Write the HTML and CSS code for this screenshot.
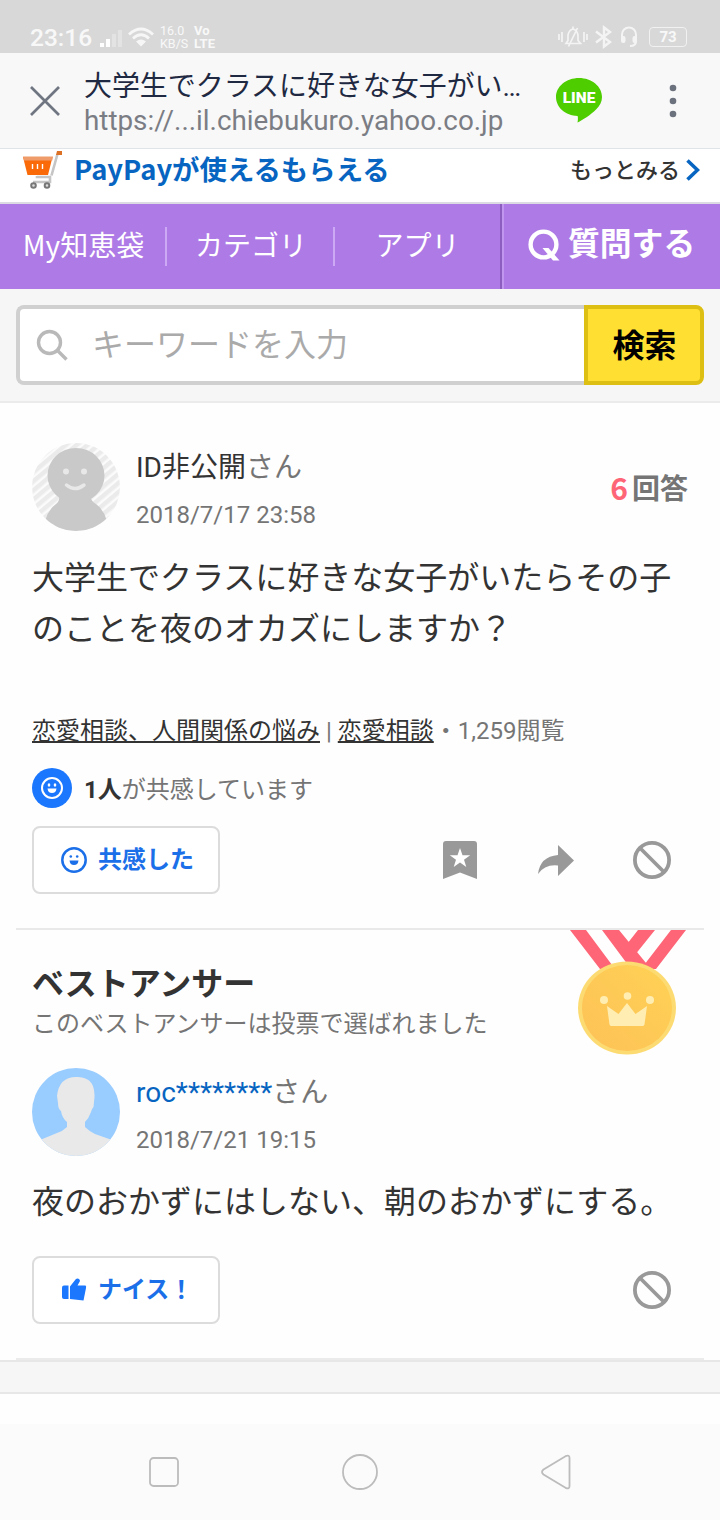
FILE: index.html
```html
<!DOCTYPE html>
<html lang="ja">
<head>
<meta charset="utf-8">
<title>Yahoo!知恵袋</title>
<link rel="stylesheet" href="styles.css">
</head>
<body>
<div class="status">
  <span class="clock">23:16</span>
  <svg class="signal" width="22" height="18" viewBox="0 0 22 18"><g fill="#fff"><rect x="0" y="13" width="4" height="4"/><rect x="6" y="9" width="4" height="8"/><g opacity=".3"><rect x="12" y="4" width="4" height="13"/><rect x="18" y="0" width="4" height="17"/></g></g></svg>
  <svg class="wifi" width="26" height="20" viewBox="0 0 26 20"><g fill="none" stroke="#f6f6f6" stroke-width="2.8"><path d="M1 7.5Q13-3.5 25 7.5"/><path d="M5 11.5Q13 4 21 11.5"/></g><path d="M8 14.5Q13 10.5 18 14.5L13 19.5Z" fill="#f6f6f6"/></svg>
  <span class="tiny speed"><span>16.0</span><span>KB/S</span></span>
  <span class="tiny volte"><span>Vo</span><span>LTE</span></span>
  <span class="status-icons">
    <svg width="30" height="24" viewBox="0 0 30 24"><g fill="none" stroke="#f4f4f4" stroke-width="1.7"><path d="M1 9v6M4 7v10M26 7v10M29 9v6"/><path d="M8 18.500l2-3V10Q11 5 15 4Q19 5 20 10v5.500L22.500 18.500ZM15 4V1.500M19.500 3L10.500 21.500"/></g></svg>
    <svg width="18" height="24" viewBox="0 0 18 24"><path d="M1 6.500L15 17L9 21.500V2.500L15 7L1 17.500" fill="none" stroke="#f4f4f4" stroke-width="2.400"/></svg>
    <svg width="18" height="24" viewBox="0 0 18 24"><path d="M2 14V9.500a7 7 0 0 1 14 0V16Q16 21 10 21" fill="none" stroke="#f4f4f4" stroke-width="2"/><rect x="1" y="11" width="4.500" height="7" rx="2" fill="#f4f4f4"/><rect x="12.500" y="11" width="4.500" height="7" rx="2" fill="#f4f4f4"/></svg>
    <span class="battery">73</span>
  </span>
</div>

<header class="toolbar">
  <svg class="close" width="30" height="30" viewBox="0 0 30 30"><path d="M1 1L29 29M29 1L1 29" stroke="#6f7681" stroke-width="2.700"/></svg>
  <div class="page-info">
    <div class="page-title">大学生でクラスに好きな女子がい…</div>
    <div class="page-url">https://...il.chiebukuro.yahoo.co.jp</div>
  </div>
  <div class="line-logo">
    <svg width="46" height="45" viewBox="0 0 46 45"><path d="M23 0C35.700 0 46 8.500 46 19c0 5-2.200 9-6 12.500C35 36.500 27 42 21.500 44.500c.5-2.500.6-5 .1-6.600C9.500 37.500 0 29.500 0 19C0 8.500 10.300 0 23 0Z" fill="#4ecd00"/></svg>
    <span class="line-text">LINE</span>
  </div>
  <svg class="more" width="8" height="34" viewBox="0 0 8 34"><g fill="#6b727d"><circle cx="4" cy="4" r="3.300"/><circle cx="4" cy="17" r="3.300"/><circle cx="4" cy="30" r="3.300"/></g></svg>
</header>

<div class="promo">
  <svg class="cart" width="40" height="38" viewBox="0 0 40 38"><path d="M34.500 3L28.500 24.500M14 25v1h13v5H10" fill="none" stroke="#c5c5c5" stroke-width="2.600"/><path d="M0 6h29.500l-4.500 18H4.500Z" fill="#fa6a08"/><path d="M0 5.500h30l-.7 4H1Z" fill="#f09b6a"/><path d="M34 0h5v4h-6Z" fill="#dc7125"/><path d="M9.500 13v5M14.500 13v5M19.500 13v5" stroke="#fff" stroke-width="1.400"/><g fill="#ddd" stroke="#777" stroke-width="2"><circle cx="10.500" cy="34.500" r="2.300"/><circle cx="24" cy="34.500" r="2.300"/></g></svg>
  <span class="promo-title">PayPayが使えるもらえる</span>
  <span class="promo-more">もっとみる</span>
  <svg width="14" height="22" viewBox="0 0 14 22"><path d="M1.500 1.500L11.500 11L1.500 20.500" fill="none" stroke="#0765c1" stroke-width="3.600"/></svg>
</div>

<nav class="tabs">
  <a class="tab">My知恵袋</a>
  <a class="tab">カテゴリ</a>
  <a class="tab">アプリ</a>
  <a class="tab-ask"><svg width="33" height="33" viewBox="0 0 33 33"><circle cx="15.500" cy="15.500" r="12.900" fill="none" stroke="#fff" stroke-width="4.400"/><path d="M14.500 19h6l11 12.500h-6.500Z" fill="#fff"/></svg><span>質問する</span></a>
</nav>

<div class="search">
  <div class="search-box">
    <svg width="32" height="32" viewBox="0 0 32 32"><circle cx="13.500" cy="13.500" r="11" fill="none" stroke="#b9b9b9" stroke-width="3.400"/><path d="M21 21L30.500 30.500" stroke="#b9b9b9" stroke-width="3.400"/></svg>
    <span>キーワードを入力</span>
  </div>
  <div class="search-btn">検索</div>
</div>

<section class="question">
  <div class="user">
    <svg width="88" height="88" viewBox="0 0 88 88"><defs><clipPath id="round"><circle cx="44" cy="44" r="44"/></clipPath><pattern id="stripes" width="7" height="7" patternUnits="userSpaceOnUse" patternTransform="rotate(50)"><rect width="7" height="7" fill="#fbfbfb"/><rect width="4.500" height="7" fill="#ebebeb"/></pattern></defs><g clip-path="url(#round)"><rect width="88" height="88" fill="url(#stripes)"/><ellipse cx="44" cy="32.500" rx="28.500" ry="27.500" fill="#c9c9c9"/><path d="M27 53Q28 58 24 61Q16 67 13 78V88H75V78Q72 67 64 61Q58 57 59 53Z" fill="#c9c9c9"/></g><g fill="#e8e8e8"><circle cx="34" cy="28.500" r="3"/><circle cx="52" cy="28.500" r="3"/></g><path d="M34.500 42Q43 49 52 42" fill="none" stroke="#e8e8e8" stroke-width="3.500" stroke-linecap="round"/></svg>
    <div class="who"><div class="name">ID非公開<span class="san">さん</span></div><div class="date">2018/7/17 23:58</div></div>
    <div class="count"><b>6</b>回答</div>
  </div>
  <p class="body">大学生でクラスに好きな女子がいたらその子のことを夜のオカズにしますか？</p>
  <div class="meta"><a class="cat">恋愛相談、人間関係の悩み</a> | <a class="cat">恋愛相談</a><span class="dot">・</span>1,259閲覧</div>
  <div class="empathy">
    <svg width="40" height="40" viewBox="0 0 40 40"><circle cx="20" cy="20" r="20" fill="#1b77fd"/><circle cx="20" cy="20" r="10" fill="none" stroke="#fff" stroke-width="2"/><g fill="#fff"><ellipse cx="17" cy="17" rx="1.300" ry="1.700"/><ellipse cx="23" cy="17" rx="1.300" ry="1.700"/><path d="M15.500 20.500h9Q24 25 20 25T15.500 20.500Z"/></g></svg>
    <span class="empathy-text"><b>1人</b>が共感しています</span>
  </div>
  <div class="actions">
    <a class="btn"><svg width="26" height="26" viewBox="0 0 26 26"><circle cx="13" cy="13" r="11.700" fill="none" stroke="#1b6fe8" stroke-width="2.500"/><g fill="#1b6fe8"><circle cx="9.800" cy="9.500" r="1.300"/><circle cx="16.200" cy="9.500" r="1.300"/><path d="M8.500 13.500h9Q17 18 13 18T8.500 13.500Z"/></g></svg><span>共感した</span></a>
    <div class="icons">
      <svg width="34" height="38" viewBox="0 0 34 38"><path d="M3 0H31Q34 0 34 3V38L17 31.500L0 38V3Q0 0 3 0Z" fill="#999"/><path d="M17 7l2.500 7.200h7.700l-6.200 4.600 2.300 7.200-6.300-4.500-6.300 4.500 2.300-7.200-6.200-4.600h7.700Z" fill="#fff"/></svg>
      <svg class="share" width="36" height="31" viewBox="0 0 36 31"><path d="M20 0L36 15.500L20 31V20.500Q7 19 0 29Q2 11.500 20 10Z" fill="#999"/></svg>
      <svg width="38" height="38" viewBox="0 0 38 38"><g fill="none" stroke="#999" stroke-width="3.800"><circle cx="19" cy="19" r="17.100"/><path d="M7.500 7.500L30.500 30.500"/></g></svg>
    </div>
  </div>
</section>

<section class="answer">
  <svg class="medal" width="118" height="126" viewBox="0 0 118 126"><defs><linearGradient id="gold" x1="1" y1="0" x2="0" y2="1"><stop offset="0" stop-color="#ffd255"/><stop offset="1" stop-color="#fdc157"/></linearGradient></defs><path d="M1 0H17L46 39H31ZM33 0H50L77 33L82 39H62ZM69 0H86L67.500 23L58 14ZM102 0H117L87 39L72 39Z" fill="#fe6677"/><ellipse cx="58" cy="78" rx="49" ry="46.500" fill="#fddb73"/><ellipse cx="58" cy="78" rx="45" ry="43" fill="url(#gold)"/><g fill="#ffedb2"><path d="M38 76l11.500 8L58 73l8.500 11L78 76l-2.500 18.500Q75 96 73.500 96H42.500Q41 96 40.500 94.500Z"/><circle cx="35" cy="70" r="4"/><circle cx="58.500" cy="66" r="3.800"/><circle cx="81" cy="70" r="4"/></g></svg>
  <h2 class="best">ベストアンサー</h2>
  <div class="voted">このベストアンサーは投票で選ばれました</div>
  <div class="user">
    <svg width="88" height="88" viewBox="0 0 88 88"><circle cx="44" cy="44" r="44" fill="#9cf"/><g clip-path="url(#round)" fill="#e9e9e9"><path d="M44 9C56 9 63 14 62.500 29L61.500 39Q59.500 41 59 44Q57 50 53 54V59Q57 63 63 66L80 72V90H8V72L25 65Q31 63 35 59V54Q30 50 29 43Q26 41 26 35L25 28Q27 9 44 9Z"/></g></svg>
    <div class="who"><div class="name"><a class="id">roc********</a><span class="san">さん</span></div><div class="date">2018/7/21 19:15</div></div>
  </div>
  <p class="body">夜のおかずにはしない、朝のおかずにする。</p>
  <div class="actions">
    <a class="btn"><svg width="26" height="26" viewBox="0 0 26 26"><g fill="#1b77fd"><path d="M3 8.500H7.500V22H3Q1 22 1 20V10.500Q1 8.500 3 8.500Z"/><path d="M9 9.500L14.500 2.500Q16.500 .5 18.500 2.500L19 4L16.500 8.500H24.500Q25.500 9 25 11L22.500 23.500L9 22Z"/></g></svg><span>ナイス！</span></a>
    <div class="icons">
      <svg width="38" height="38" viewBox="0 0 38 38"><g fill="none" stroke="#999" stroke-width="3.800"><circle cx="19" cy="19" r="17.100"/><path d="M7.500 7.500L30.500 30.500"/></g></svg>
    </div>
  </div>
</section>
<div class="gap"></div>

<footer class="sysnav">
  <svg width="30" height="30" viewBox="0 0 30 30"><rect x="1" y="1" width="28" height="28" rx="3.500" fill="none" stroke="#bcbcbc" stroke-width="1.800"/></svg>
  <svg width="36" height="36" viewBox="0 0 36 36"><circle cx="18" cy="18" r="17" fill="none" stroke="#bcbcbc" stroke-width="1.800"/></svg>
  <svg width="30" height="36" viewBox="0 0 30 36"><path d="M2.500 15.500L24.500 2.200Q28.500.5 28.500 4V32Q28.500 35.500 24.500 33.800L2.500 20.500Q-.5 18 2.500 15.500Z" fill="none" stroke="#bcbcbc" stroke-width="1.800"/></svg>
</footer>
</body>
</html>
```
FILE: styles.css
```css
* { box-sizing: border-box; }
body {
  margin: 0;
  width: 720px;
  height: 1520px;
  overflow: hidden;
  display: flex;
  flex-direction: column;
  background: #fefefe;
  color: #333;
  font-family: Roboto, "Noto Sans CJK JP", sans-serif;
}
svg { display: block; flex: none; }
p, h2 { margin: 0; }
span, a, div { white-space: nowrap; }

.status {
  height: 53px;
  flex: none;
  display: flex;
  align-items: center;
  padding: 20px 32px 0 30px;
  background: #d8d8d8;
  color: #f8f8f8;
}
.clock { width: 70px; font-size: 24.5px; font-weight: 500; line-height: 30px; padding-top: 3px; }
.wifi { margin: 0 6px; }
.signal { margin-top: 4px; }
.tiny { display: flex; flex-direction: column; font-size: 12.5px; line-height: 13px; }
.speed { width: 34px; }
.volte { font-weight: 700; font-size: 13px; }
.status-icons { display: flex; align-items: center; margin-left: auto; gap: 7px; margin-right: 1px; }
.battery {
  width: 38px;
  height: 20px;
  margin-left: 4px;
  border: 1.5px solid #f1f1f1;
  border-radius: 4px;
  font-size: 15px;
  line-height: 18px;
  font-weight: 700;
  text-align: center;
}

.toolbar {
  height: 96px;
  flex: none;
  display: flex;
  align-items: center;
  padding: 0 43px 0 30px;
  background: #f8f8f8;
  border-bottom: 1px solid #e0e4e8;
}
.page-info { width: 472px; margin-left: 24px; padding-top: 6px; }
.page-title { font-size: 27.95px; line-height: 35px; color: #1f2942; }
.page-url { font-size: 27.8px; line-height: 34px; color: #7b7d84; }
.line-logo { position: relative; width: 46px; height: 45px; }
.line-text {
  position: absolute;
  inset: 10px 0 auto;
  text-align: center;
  color: #fff;
  font-size: 15.5px;
  line-height: 20px;
  font-weight: 900;
}
.more { margin-left: auto; }

.promo {
  height: 55px;
  flex: none;
  display: flex;
  align-items: center;
  padding: 0 20px 12px 23px;
  background: #fff;
  border-bottom: 2px solid #dcdae2;
}
.promo-title {
  margin: -4px 0 0 11px;
  font: 700 27.4px/40px "Noto Sans CJK JP", sans-serif;
  color: #0765c1;
}
.promo-more {
  margin: -4px 6px 0 auto;
  font: 500 22px/40px "Noto Sans CJK JP", sans-serif;
}

.tabs {
  height: 85px;
  flex: none;
  display: grid;
  grid-template-columns: 167px 168px 165px 220px;
  align-items: center;
  background: #ae7ae6;
  color: #fff;
  font-family: "Noto Sans CJK JP", sans-serif;
}
.tab {
  height: 39px;
  padding-left: 2px;
  font-size: 28px;
  line-height: 34px;
  text-align: center;
  border-right: 2px solid #cda8f4;
}
.tab:nth-child(3) { border-color: transparent; }
.tab-ask {
  height: 85px;
  display: flex;
  align-items: center;
  gap: 7px;
  padding: 0 0 9px 26px;
  border-left: 2px solid #8d5dc0;
  box-shadow: inset 2px 0 #c196ef;
  font-size: 31.8px;
  line-height: 40px;
  font-weight: 700;
}
.tab-ask svg { margin-top: 6px; }
.tab-ask span { margin-top: -2px; }

.search {
  height: 114px;
  flex: none;
  display: flex;
  padding: 16px 16px 0;
  background: #f6f6f6;
  border-bottom: 2px solid #ebebeb;
}
.search-box {
  flex: 1;
  height: 80px;
  display: flex;
  align-items: center;
  gap: 24px;
  padding-left: 16px;
  background: #fff;
  border: 4px solid #d0d0d0;
  border-right: 0;
  border-radius: 8px 0 0 8px;
  color: #aaa;
  font-size: 32px;
}
.search-box span { line-height: 40px; }
.search-btn {
  width: 120px;
  height: 80px;
  padding-left: 1px;
  border: 4px solid #ddbf13;
  border-radius: 0 8px 8px 0;
  background: #ffdf31;
  color: #000;
  font-size: 32px;
  line-height: 75px;
  font-weight: 700;
  text-align: center;
}

.question {
  height: 525px;
  flex: none;
  padding: 40px 32px 0;
}
.user { display: flex; height: 88px; }
.who { margin-left: 16px; }
.name { font-size: 28px; line-height: 40px; padding-top: 5px; }
.san { color: #757575; }
.id { color: #0765c1; }
.date { font-size: 24px; line-height: 30px; margin-top: 12px; color: #757575; }
.count {
  display: flex;
  margin-left: auto;
  padding-top: 27px;
  gap: 4px;
  font: 700 28px/40px Roboto, "Noto Sans CJK JP", sans-serif;
  color: #757575;
}
.count b { margin-top: -3px; color: #fe6677; font: 700 30px/40px "Noto Sans CJK JP", sans-serif; }
.body { font-size: 32px; line-height: 51.2px; white-space: normal; }
.question .body { margin-top: 22px; }
.meta { margin-top: 58px; font-size: 24px; line-height: 36px; color: #757575; }
.cat { color: #333; text-decoration: underline; text-decoration-thickness: 2px; text-underline-offset: 2px; }
.empathy {
  display: flex;
  align-items: center;
  gap: 12px;
  margin-top: 19px;
  font-size: 24px;
  line-height: 36px;
  color: #757575;
}
.empathy-text { padding-top: 3px; }
.empathy b { color: #333; }
.actions { display: flex; justify-content: space-between; align-items: center; margin-top: 18px; padding-right: 17px; }
.btn {
  width: 188px;
  height: 68px;
  display: flex;
  align-items: center;
  gap: 11px;
  padding-left: 27px;
  border: 2px solid #dcdcdc;
  border-radius: 8px;
  background: #fff;
  color: #1b6fe8;
  font-size: 24px;
  line-height: 36px;
  font-weight: 700;
}
.icons { display: flex; align-items: center; gap: 59px; }
.share { margin-left: 2px; }

.answer {
  position: relative;
  height: 432px;
  flex: none;
  margin: 0 16px;
  padding: 32px 16px 0;
  border-top: 2px solid #e9e9e9;
  border-bottom: 2px solid #ebebeb;
}
.medal { position: absolute; right: 17px; top: 0; }
.best { font-size: 32px; line-height: 44px; font-weight: 700; }
.voted { font-size: 24px; line-height: 36px; color: #757575; }
.answer .user { margin-top: 26px; }
.answer .body { margin-top: 21px; }
.answer .actions { margin-top: 28px; }

.gap {
  height: 34px;
  flex: none;
  background: #f6f6f6;
  border-top: 2px solid #e7e7e7;
  border-bottom: 2px solid #e7e7e7;
}

.sysnav {
  height: 96px;
  flex: none;
  margin-top: auto;
  display: flex;
  align-items: center;
  justify-content: space-between;
  padding: 0 149px;
  background: #fbfbfb;
}
```
